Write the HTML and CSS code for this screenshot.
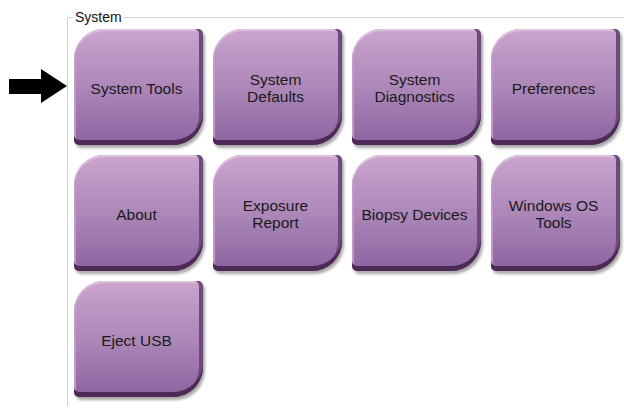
FILE: index.html
```html
<!DOCTYPE html>
<html lang="en">
<head>
    <meta charset="UTF-8">
    <meta name="viewport" content="width=device-width, initial-scale=1.0">
    <title>System</title>
    <link rel="stylesheet" href="styles.css">
</head>
<body>
    <div class="pointer">
        <svg width="58" height="34" viewBox="0 0 58 34">
            <polygon points="0,10 32,10 32,0 58,17 32,34 32,25 0,25" fill="#000"/>
        </svg>
    </div>

    <fieldset class="group">
        <legend>System</legend>
        <div class="tiles">
            <button class="tile">System Tools</button>
            <button class="tile">System<br>Defaults</button>
            <button class="tile">System<br>Diagnostics</button>
            <button class="tile">Preferences</button>
            <button class="tile">About</button>
            <button class="tile">Exposure<br>Report</button>
            <button class="tile">Biopsy Devices</button>
            <button class="tile">Windows OS<br>Tools</button>
            <button class="tile">Eject USB</button>
        </div>
    </fieldset>
</body>
</html>
```

FILE: styles.css
```css
body {
    margin: 0;
    padding: 0;
    display: flex;
    align-items: flex-start;
    background-color: #fff;
    font-family: "Liberation Sans", Arial, sans-serif;
    color: #1a1a1a;
}

.pointer {
    width: 67px;
    flex: none;
}

.pointer svg {
    display: block;
    margin: 69px 0 0 9px;
}

.group {
    flex: 1;
    margin: 8px 0 0 0;
    padding: 3px 0 0 6px;
    border: 1px solid #d4d4d4;
    border-right: none;
    border-bottom: none;
    height: 398px;
    box-sizing: border-box;
}

.group legend {
    font-size: 14px;
    line-height: 18px;
    padding: 0 2px;
    margin-left: -1px;
    color: #111;
}

.tiles {
    display: grid;
    grid-template-columns: repeat(4, 129px);
    grid-auto-rows: 116px;
    gap: 10px;
}

.tile {
    font-family: "Liberation Sans", Arial, sans-serif;
    font-size: 15.5px;
    line-height: 17px;
    color: #1a1a1a;
    border: none;
    padding: 2px 4px 0 0;
    border-radius: 30px 5px 30px 5px;
    background: linear-gradient(#cba4ce, #a984b6 55%, #8b63a0);
    box-shadow:
        inset 0 -5px 0 #4c2a55,
        inset -4px 0 0 #6c4a7b,
        inset 0 2px 1px #dcc4df,
        inset 2px 0 1px #c09ac6,
        2px 3px 3px rgba(0, 0, 0, 0.35);
    cursor: pointer;
}

.tile:hover {
    background: linear-gradient(#d3b0d6, #b08dbd 55%, #9470a8);
}
```
